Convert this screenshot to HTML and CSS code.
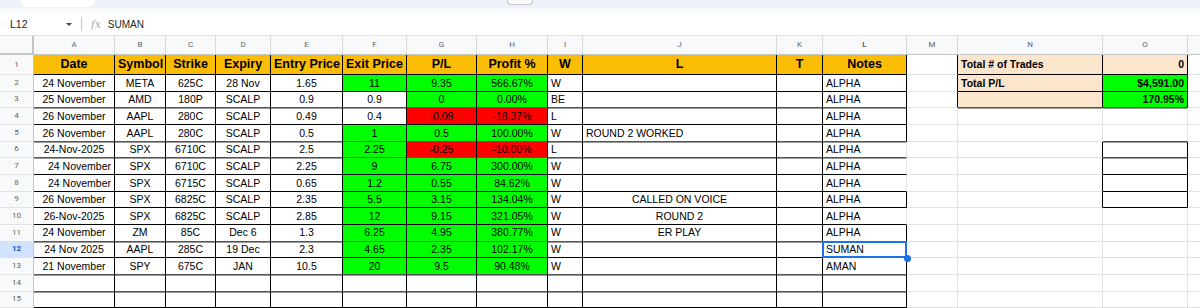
FILE: index.html
```html
<!DOCTYPE html>
<html>
<head>
    <title>Trade Log</title>
    <link rel="stylesheet" href="styles.css">
</head>
<body>
    <div class="topbar"><div class="search"></div><div class="tab"></div></div>
    <div class="strip"></div>

    <!-- formula bar -->
    <div class="fbar">
        <span class="ref">L12</span>
        <span class="drop"></span>
        <span class="sep"></span>
        <span class="fx">fx</span>
        <span class="val">SUMAN</span>
    </div>

    <table class="sheet">
        <colgroup>
            <col style="width:34px"><col style="width:81px"><col style="width:51px"><col style="width:50px">
            <col style="width:55px"><col style="width:72px"><col style="width:64px"><col style="width:70px">
            <col style="width:71px"><col style="width:35px"><col style="width:194px"><col style="width:46px">
            <col style="width:84px"><col style="width:51px"><col style="width:145px"><col style="width:85px">
            <col style="width:60px">
        </colgroup>
        <tr class="cols">
            <td class="corner"></td><td>A</td><td>B</td><td>C</td><td>D</td><td>E</td><td>F</td><td>G</td>
            <td>H</td><td>I</td><td>J</td><td>K</td><td class="on">L</td><td>M</td><td>N</td><td>O</td><td></td>
        </tr>
        <tr class="first">
            <td class="rn">1</td>
            <td class="hd k">Date</td><td class="hd k">Symbol</td><td class="hd k">Strike</td><td class="hd k">Expiry</td>
            <td class="hd k">Entry Price</td><td class="hd k">Exit Price</td><td class="hd k">P/L</td><td class="hd k">Profit %</td>
            <td class="hd k">W</td><td class="hd k">L</td><td class="hd k">T</td><td class="hd k">Notes</td>
            <td class="kr"></td><td class="p k bold">Total # of Trades</td><td class="p k bold rt">0</td><td></td>
        </tr>
        <tr>
            <td class="rn">2</td>
            <td class="k c">24 November</td><td class="k c">META</td><td class="k c">625C</td><td class="k c">28 Nov</td>
            <td class="k c">1.65</td><td class="k c g">11</td><td class="k c g">9.35</td><td class="k c g">566.67%</td>
            <td class="k">W</td><td class="k"></td><td class="k"></td><td class="k">ALPHA</td>
            <td class="kr"></td><td class="p k bold">Total P/L</td><td class="g k bold rt">$4,591.00</td><td></td>
        </tr>
        <tr class="soft">
            <td class="rn">3</td>
            <td class="k c">25 November</td><td class="k c">AMD</td><td class="k c">180P</td><td class="k c">SCALP</td>
            <td class="k c">0.9</td><td class="k c">0.9</td><td class="k c g">0</td><td class="k c g">0.00%</td>
            <td class="k">BE</td><td class="k"></td><td class="k"></td><td class="k">ALPHA</td>
            <td class="kr"></td><td class="p k"></td><td class="g k bold rt">170.95%</td><td></td>
        </tr>
        <tr>
            <td class="rn">4</td>
            <td class="k c">26 November</td><td class="k c">AAPL</td><td class="k c">280C</td><td class="k c">SCALP</td>
            <td class="k c">0.49</td><td class="k c">0.4</td><td class="k c r">-0.09</td><td class="k c r">-18.37%</td>
            <td class="k">L</td><td class="k"></td><td class="k"></td><td class="k">ALPHA</td>
            <td></td><td></td><td></td><td></td>
        </tr>
        <tr class="soft">
            <td class="rn">5</td>
            <td class="k c">26 November</td><td class="k c">AAPL</td><td class="k c">280C</td><td class="k c">SCALP</td>
            <td class="k c">0.5</td><td class="k c g">1</td><td class="k c g">0.5</td><td class="k c g">100.00%</td>
            <td class="k">W</td><td class="k">ROUND 2 WORKED</td><td class="k"></td><td class="k">ALPHA</td>
            <td></td><td></td><td class="kb"></td><td></td>
        </tr>
        <tr class="soft">
            <td class="rn">6</td>
            <td class="k c">24-Nov-2025</td><td class="k c">SPX</td><td class="k c">6710C</td><td class="k c">SCALP</td>
            <td class="k c">2.5</td><td class="k c g">2.25</td><td class="k c r">-0.25</td><td class="k c r">-10.00%</td>
            <td class="k">L</td><td class="k"></td><td class="k"></td><td class="kb">ALPHA</td>
            <td></td><td class="kr"></td><td class="k"></td><td></td>
        </tr>
        <tr>
            <td class="rn">7</td>
            <td class="k rt">24 November</td><td class="k c">SPX</td><td class="k c">6710C</td><td class="k c">SCALP</td>
            <td class="k c">2.25</td><td class="k c g">9</td><td class="k c g">6.75</td><td class="k c g">300.00%</td>
            <td class="k">W</td><td class="k"></td><td class="k"></td><td class="kb">ALPHA</td>
            <td></td><td class="kr"></td><td class="k"></td><td></td>
        </tr>
        <tr>
            <td class="rn">8</td>
            <td class="k rt">24 November</td><td class="k c">SPX</td><td class="k c">6715C</td><td class="k c">SCALP</td>
            <td class="k c">0.65</td><td class="k c g">1.2</td><td class="k c g">0.55</td><td class="k c g">84.62%</td>
            <td class="k">W</td><td class="k"></td><td class="k"></td><td class="kb">ALPHA</td>
            <td></td><td class="kr"></td><td class="k"></td><td></td>
        </tr>
        <tr>
            <td class="rn">9</td>
            <td class="k c">26 November</td><td class="k c">SPX</td><td class="k c">6825C</td><td class="k c">SCALP</td>
            <td class="k c">2.35</td><td class="k c g">5.5</td><td class="k c g">3.15</td><td class="k c g">134.04%</td>
            <td class="k">W</td><td class="k c">CALLED ON VOICE</td><td class="k"></td><td class="k">ALPHA</td>
            <td></td><td class="kr"></td><td class="k"></td><td></td>
        </tr>
        <tr>
            <td class="rn">10</td>
            <td class="k c">26-Nov-2025</td><td class="k c">SPX</td><td class="k c">6825C</td><td class="k c">SCALP</td>
            <td class="k c">2.85</td><td class="k c g">12</td><td class="k c g">9.15</td><td class="k c g">321.05%</td>
            <td class="k">W</td><td class="k c">ROUND 2</td><td class="k"></td><td class="kb">ALPHA</td>
            <td></td><td></td><td></td><td></td>
        </tr>
        <tr class="soft">
            <td class="rn">11</td>
            <td class="k c">24 November</td><td class="k c">ZM</td><td class="k c">85C</td><td class="k c">Dec 6</td>
            <td class="k c">1.3</td><td class="k c g">6.25</td><td class="k c g">4.95</td><td class="k c g">380.77%</td>
            <td class="k">W</td><td class="k c">ER PLAY</td><td class="k"></td><td class="k">ALPHA</td>
            <td></td><td></td><td></td><td></td>
        </tr>
        <tr>
            <td class="rn on">12</td>
            <td class="k c">24 Nov 2025</td><td class="k c">AAPL</td><td class="k c">285C</td><td class="k c">19 Dec</td>
            <td class="k c">2.3</td><td class="k c g">4.65</td><td class="k c g">2.35</td><td class="k c g">102.17%</td>
            <td class="k">W</td><td class="k"></td><td class="k"></td><td class="k sel">SUMAN</td>
            <td></td><td></td><td></td><td></td>
        </tr>
        <tr class="soft">
            <td class="rn">13</td>
            <td class="k c">21 November</td><td class="k c">SPY</td><td class="k c">675C</td><td class="k c">JAN</td>
            <td class="k c">10.5</td><td class="k c g">20</td><td class="k c g">9.5</td><td class="k c g">90.48%</td>
            <td class="k">W</td><td class="k"></td><td class="k"></td><td class="k">AMAN</td>
            <td></td><td></td><td></td><td></td>
        </tr>
        <tr class="soft">
            <td class="rn">14</td>
            <td class="k"></td><td class="k"></td><td class="k"></td><td class="k"></td><td class="k"></td><td class="k"></td>
            <td class="k"></td><td class="k"></td><td class="k"></td><td class="k"></td><td class="k"></td><td class="k"></td>
            <td></td><td></td><td></td><td></td>
        </tr>
        <tr>
            <td class="rn">15</td>
            <td class="k"></td><td class="k"></td><td class="k"></td><td class="k"></td><td class="k"></td><td class="k"></td>
            <td class="k"></td><td class="k"></td><td class="k"></td><td class="k"></td><td class="k"></td><td class="k"></td>
            <td></td><td></td><td></td><td></td>
        </tr>
    </table>
</body>
</html>
```

FILE: styles.css
```css
body {
    margin: 0;
    font-family: "Liberation Sans", Arial, sans-serif;
    background: #fff;
    color: #000;
    overflow: hidden;
}

/* app chrome */
.topbar {
    height: 8px;
    background: #edf2fa;
    display: flex;
}
.topbar .search {
    width: 75px;
    height: 7px;
    margin-left: 20px;
    background: #fff;
    border-radius: 0 0 10px 10px;
}
.topbar .tab {
    width: 24px;
    height: 4px;
    margin-left: 412px;
    background: #f8fafd;
    border: 1px solid #c4c7c5;
    border-top: none;
    border-radius: 0 0 4px 4px;
}
.strip {
    height: 5px;
    background: #f8fafd;
}
.fbar {
    height: 22px;
    display: flex;
    align-items: center;
    border-bottom: 1px solid #e1e3e1;
    font-size: 10px;
    color: #1f1f1f;
}
.fbar .ref {
    margin-left: 10px;
    width: 56px;
    font-size: 10.5px;
}
.fbar .drop {
    width: 0;
    height: 0;
    border-left: 3px solid transparent;
    border-right: 3px solid transparent;
    border-top: 3px solid #444746;
}
.fbar .sep {
    width: 1px;
    height: 14px;
    background: #c4c7c5;
    margin-left: 9px;
}
.fbar .fx {
    margin-left: 9px;
    font-family: "DejaVu Serif", serif;
    font-style: italic;
    font-size: 10.5px;
    color: #a8abad;
}
.fbar .val {
    margin-left: 7px;
}

/* grid */
.sheet {
    border-collapse: separate;
    border-spacing: 0;
    table-layout: fixed;
    width: 1248px;
}
.sheet td {
    height: 16.667px;
    padding: 0 3px;
    border-right: 1px solid #e2e2e2;
    border-bottom: 1px solid #e2e2e2;
    font-size: 10.5px;
    line-height: 1;
    white-space: nowrap;
    overflow: hidden;
    vertical-align: middle;
    box-sizing: border-box;
}
.sheet tr.cols td {
    height: 19px;
    background: #f8f9fa;
    color: #5f6368;
    font-family: Roboto, sans-serif;
    font-size: 8px;
    text-align: center;
    border-right-color: #d6d8da;
    border-bottom-color: #c4c7c5;
}
.sheet tr.cols td.corner {
    border-right: 2px solid #c4c7c5;
    border-bottom: 2px solid #c4c7c5;
}
.sheet tr.first td {
    height: 20px;
}
.sheet td.rn {
    background: #f8f9fa;
    color: #5f6368;
    font-family: Roboto, sans-serif;
    font-size: 8px;
    text-align: center;
    padding: 0;
    border-right-color: #c4c7c5;
}
.sheet td.on {
    background: #d3e3fd;
    color: #0b57d0;
    font-weight: bold;
}

/* cell formats */
.sheet td.hd {
    background: #fbbc04;
    font-weight: bold;
    font-size: 12.5px;
    text-align: center;
}
.c { text-align: center; }
.rt { text-align: right; }
.bold { font-weight: bold; }
.sheet td.g { background: #00ff00; }
.sheet td.r { background: #ff0000; }
.sheet td.p { background: #fce5cd; }

/* black borders (right + bottom, the grid draws the rest) */
.sheet td.k {
    border-right-color: #000;
    border-bottom-color: #000;
}
.sheet td.kr { border-right-color: #000; }
.sheet td.kb { border-bottom-color: #000; }
/* lines that land between pixels look greyer and thicker in the shot */
.sheet tr.soft td.k,
.sheet tr.soft td.kb {
    border-bottom-color: #555;
    box-shadow: 0 1px 0 #9a9a9a;
}

/* active cell */
.sheet td.sel {
    position: relative;
    overflow: visible;
}
.sheet td.sel::after {
    content: "";
    position: absolute;
    left: -1px;
    top: -1px;
    right: -1px;
    bottom: -1px;
    border: 2px solid #1a73e8;
}
.sheet td.sel::before {
    content: "";
    position: absolute;
    right: -5px;
    bottom: -5px;
    width: 7px;
    height: 7px;
    border-radius: 50%;
    background: #1a73e8;
    z-index: 1;
}
```
